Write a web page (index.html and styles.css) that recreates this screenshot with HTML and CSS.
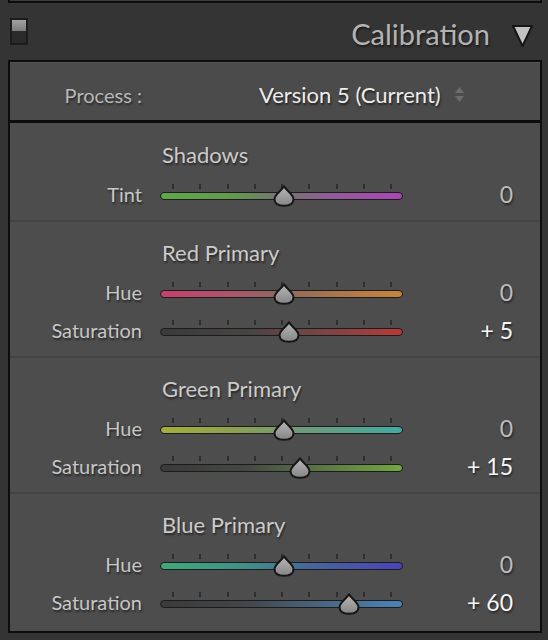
FILE: index.html
```html
<!DOCTYPE html>
<html>
<head>
<meta charset="utf-8">
<link rel="stylesheet" href="styles.css">
</head>
<body>
<div class="prev-panel"></div>
<div class="header">
  <span class="switch"><span class="switch-top"></span></span>
  <span class="header-title">Calibration</span>
  <svg class="disclosure" width="23" height="24" viewBox="0 0 23 24"><path d="M2 2 L21 2 L11.5 22 Z" fill="#c2c2c2" stroke="#151515" stroke-width="2" stroke-linejoin="round"/></svg>
</div>
<div class="panel">
  <div class="process">
    <span class="process-label">Process :</span>
    <span class="process-value">Version 5 (Current)</span>
    <svg class="stepper" width="11" height="17" viewBox="0 0 11 17"><path d="M5.5 1 L10 7 L1 7 Z" fill="#6c6c6c"/><path d="M5.5 16 L10 10 L1 10 Z" fill="#6c6c6c"/></svg>
  </div>

  <section class="group">
    <div class="group-title">Shadows</div>
    <div class="row">
      <span class="label">Tint</span>
      <div class="slider">
        <div class="ticks"><i></i><i></i><i></i><i></i><i></i><i></i><i></i><i></i><i></i></div>
        <div class="track track-tint"></div>
        <svg class="thumb" style="left:112.5px" width="22" height="22" viewBox="0 0 22 22"><defs><linearGradient id="tg1" x1="0" y1="0" x2="0" y2="1"><stop offset="0" stop-color="#b8b8b8"/><stop offset="1" stop-color="#858585"/></linearGradient></defs><path d="M11 1.2 C13 5 20.5 9.5 20.5 14 C20.5 18.5 16.5 20.8 11 20.8 C5.5 20.8 1.5 18.5 1.5 14 C1.5 9.5 9 5 11 1.2 Z" fill="url(#tg1)" stroke="#161616" stroke-width="2" stroke-linejoin="round"/></svg>
      </div>
      <span class="value">0</span>
    </div>
  </section>

  <section class="group">
    <div class="group-title">Red Primary</div>
    <div class="row">
      <span class="label">Hue</span>
      <div class="slider">
        <div class="ticks"><i></i><i></i><i></i><i></i><i></i><i></i><i></i><i></i><i></i></div>
        <div class="track track-red-hue"></div>
        <svg class="thumb" style="left:112.5px" width="22" height="22" viewBox="0 0 22 22"><path d="M11 1.2 C13 5 20.5 9.5 20.5 14 C20.5 18.5 16.5 20.8 11 20.8 C5.5 20.8 1.5 18.5 1.5 14 C1.5 9.5 9 5 11 1.2 Z" fill="url(#tg1)" stroke="#161616" stroke-width="2" stroke-linejoin="round"/></svg>
      </div>
      <span class="value">0</span>
    </div>
    <div class="row">
      <span class="label">Saturation</span>
      <div class="slider">
        <div class="ticks"><i></i><i></i><i></i><i></i><i></i><i></i><i></i><i></i><i></i></div>
        <div class="track track-red-sat"></div>
        <svg class="thumb" style="left:118px" width="22" height="22" viewBox="0 0 22 22"><path d="M11 1.2 C13 5 20.5 9.5 20.5 14 C20.5 18.5 16.5 20.8 11 20.8 C5.5 20.8 1.5 18.5 1.5 14 C1.5 9.5 9 5 11 1.2 Z" fill="url(#tg1)" stroke="#161616" stroke-width="2" stroke-linejoin="round"/></svg>
      </div>
      <span class="value value-set">+ 5</span>
    </div>
  </section>

  <section class="group">
    <div class="group-title">Green Primary</div>
    <div class="row">
      <span class="label">Hue</span>
      <div class="slider">
        <div class="ticks"><i></i><i></i><i></i><i></i><i></i><i></i><i></i><i></i><i></i></div>
        <div class="track track-green-hue"></div>
        <svg class="thumb" style="left:112.5px" width="22" height="22" viewBox="0 0 22 22"><path d="M11 1.2 C13 5 20.5 9.5 20.5 14 C20.5 18.5 16.5 20.8 11 20.8 C5.5 20.8 1.5 18.5 1.5 14 C1.5 9.5 9 5 11 1.2 Z" fill="url(#tg1)" stroke="#161616" stroke-width="2" stroke-linejoin="round"/></svg>
      </div>
      <span class="value">0</span>
    </div>
    <div class="row">
      <span class="label">Saturation</span>
      <div class="slider">
        <div class="ticks"><i></i><i></i><i></i><i></i><i></i><i></i><i></i><i></i><i></i></div>
        <div class="track track-green-sat"></div>
        <svg class="thumb" style="left:128.9px" width="22" height="22" viewBox="0 0 22 22"><path d="M11 1.2 C13 5 20.5 9.5 20.5 14 C20.5 18.5 16.5 20.8 11 20.8 C5.5 20.8 1.5 18.5 1.5 14 C1.5 9.5 9 5 11 1.2 Z" fill="url(#tg1)" stroke="#161616" stroke-width="2" stroke-linejoin="round"/></svg>
      </div>
      <span class="value value-set">+ 15</span>
    </div>
  </section>

  <section class="group group-last">
    <div class="group-title">Blue Primary</div>
    <div class="row">
      <span class="label">Hue</span>
      <div class="slider">
        <div class="ticks"><i></i><i></i><i></i><i></i><i></i><i></i><i></i><i></i><i></i></div>
        <div class="track track-blue-hue"></div>
        <svg class="thumb" style="left:112.5px" width="22" height="22" viewBox="0 0 22 22"><path d="M11 1.2 C13 5 20.5 9.5 20.5 14 C20.5 18.5 16.5 20.8 11 20.8 C5.5 20.8 1.5 18.5 1.5 14 C1.5 9.5 9 5 11 1.2 Z" fill="url(#tg1)" stroke="#161616" stroke-width="2" stroke-linejoin="round"/></svg>
      </div>
      <span class="value">0</span>
    </div>
    <div class="row">
      <span class="label">Saturation</span>
      <div class="slider">
        <div class="ticks"><i></i><i></i><i></i><i></i><i></i><i></i><i></i><i></i><i></i></div>
        <div class="track track-blue-sat"></div>
        <svg class="thumb" style="left:177.9px" width="22" height="22" viewBox="0 0 22 22"><path d="M11 1.2 C13 5 20.5 9.5 20.5 14 C20.5 18.5 16.5 20.8 11 20.8 C5.5 20.8 1.5 18.5 1.5 14 C1.5 9.5 9 5 11 1.2 Z" fill="url(#tg1)" stroke="#161616" stroke-width="2" stroke-linejoin="round"/></svg>
      </div>
      <span class="value value-set">+ 60</span>
    </div>
  </section>
</div>
</body>
</html>
```

FILE: styles.css
```css
* { box-sizing: border-box; }

html, body {
  margin: 0;
  padding: 0;
  background: #343434;
  font-family: Lato, "Open Sans", sans-serif;
  width: 548px;
  height: 640px;
  overflow: hidden;
}

.prev-panel {
  margin: 0 6px 0 8px;
  height: 3px;
  border: 2px solid #0c0c0c;
  border-top: none;
  background: #3c3c3c;
}

.header {
  height: 57px;
  display: flex;
  align-items: center;
  padding: 0 0 0 10px;
}

.switch {
  width: 18px;
  height: 27px;
  margin-top: -1px;
  background: #2a2a2a;
  border: 2px solid #1c1c1c;
  display: flex;
  flex-direction: column;
}

.switch-top {
  height: 11px;
  background: linear-gradient(#a2a2a2, #7c7c7c);
}

.header-title {
  margin-left: auto;
  font-size: 29px;
  line-height: 34px;
  color: #b3b3b3;
  text-shadow: 1px 2px 2px rgba(0,0,0,0.5);
  margin-top: 5px;
}

.disclosure {
  margin: 8px 14px 0 21px;
  display: block;
}

.panel {
  margin: 0 6px 0 8px;
  border: 2px solid #0d0d0d;
  background: #4d4d4d;
}

.process {
  height: 61px;
  display: flex;
  align-items: center;
  padding-top: 6px;
  border-bottom: 3px solid #0d0d0d;
  background: #4b4b4b;
  border-top: 1px solid #565656;
}

.process-label {
  width: 132px;
  text-align: right;
  font-size: 20px;
  color: #b8b8b8;
  text-shadow: 1px 2px 2px rgba(0,0,0,0.45);
}

.process-value {
  margin-left: 117px;
  font-size: 22px;
  color: #ececec;
  text-shadow: 1px 2px 2px rgba(0,0,0,0.55);
}

.stepper {
  margin-left: 13px;
  display: block;
}

.group {
  padding: 18px 0 6px;
  border-top: 2px solid #444444;
}

.group:first-of-type {
  border-top: none;
  padding-top: 19px;
}

.group-last {
  padding-bottom: 9px;
}

.group-title {
  padding-left: 152px;
  height: 28px;
  line-height: 26px;
  font-size: 22px;
  color: #cbcbcb;
  text-shadow: 1px 2px 2px rgba(0,0,0,0.5);
  margin-bottom: 6px;
}

.row {
  display: grid;
  grid-template-columns: 150px 243px 110px;
  height: 38px;
  align-items: center;
}

.label {
  text-align: right;
  padding-right: 18px;
  font-size: 20px;
  line-height: 24px;
  margin-top: -2px;
  color: #c6c6c6;
  text-shadow: 1px 2px 2px rgba(0,0,0,0.5);
}

.value {
  text-align: right;
  font-size: 23px;
  line-height: 26px;
  margin-top: -2px;
  color: #bcbcbc;
  text-shadow: 1px 2px 2px rgba(0,0,0,0.5);
}

.value-set {
  color: #f6f6f6;
}

.slider {
  position: relative;
  height: 38px;
  padding-top: 8px;
}

.ticks {
  height: 5px;
  display: flex;
  justify-content: space-between;
  padding: 0 11px 0 12px;
}

.ticks i {
  display: block;
  width: 2px;
  height: 5px;
  background: #2e2e2e;
}

.track {
  margin-top: 3px;
  height: 8px;
  border: 1.5px solid #1c1c1c;
  border-radius: 5px;
}

.thumb {
  position: absolute;
  top: 9px;
  display: block;
}

.track-tint {
  background: linear-gradient(to right, #5ea84a 0%, #63984f 30%, #747474 50%, #905c96 70%, #aa46b4 100%);
}

.track-red-hue {
  background: linear-gradient(to right, #c8406e 0%, #a8566a 30%, #8d6860 50%, #a8744e 70%, #c8843e 100%);
}

.track-red-sat {
  background: linear-gradient(to right, #3a3a3a 0%, #474343 35%, #6e4646 60%, #b63a3a 100%);
}

.track-green-hue {
  background: linear-gradient(to right, #a6ae3a 0%, #8ca050 30%, #749a76 55%, #44aaa4 100%);
}

.track-green-sat {
  background: linear-gradient(to right, #3a3a3a 0%, #444842 35%, #566e44 60%, #72a842 100%);
}

.track-blue-hue {
  background: linear-gradient(to right, #3eaa78 0%, #40908a 35%, #46689a 60%, #4a42b8 100%);
}

.track-blue-sat {
  background: linear-gradient(to right, #3a3a3a 0%, #42464a 35%, #486076 60%, #4c84b6 100%);
}
```
